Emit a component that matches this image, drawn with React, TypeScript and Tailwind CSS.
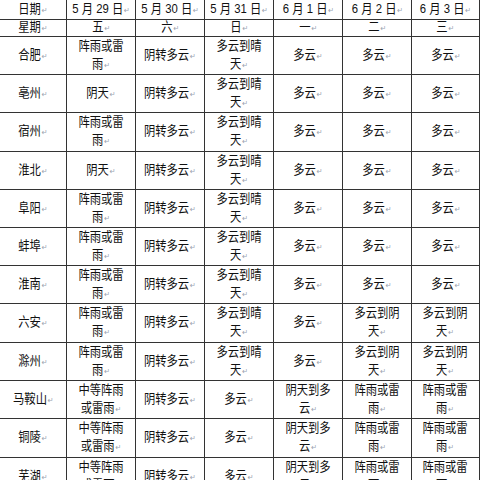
import React from 'react';

const W = {
  a: '阵雨或雷|雨',
  b: '阴天',
  c: '阴转多云',
  d: '多云到晴|天',
  e: '多云',
  f: '多云到阴|天',
  g: '中等阵雨|或雷雨',
  h: '阴天到多|云'
};

const head = ['日期', '5 月 29 日', '5 月 30 日', '5 月 31 日', '6 月 1 日', '6 月 2 日', '6 月 3 日'];
const week = ['星期', '五', '六', '日', '一', '二', '三'];

const rows: string[][] = [
  ['合肥', W.a, W.c, W.d, W.e, W.e, W.e],
  ['亳州', W.b, W.c, W.d, W.e, W.e, W.e],
  ['宿州', W.a, W.c, W.d, W.e, W.e, W.e],
  ['淮北', W.b, W.c, W.d, W.e, W.e, W.e],
  ['阜阳', W.a, W.c, W.d, W.e, W.e, W.e],
  ['蚌埠', W.a, W.c, W.d, W.e, W.e, W.e],
  ['淮南', W.a, W.c, W.d, W.e, W.e, W.e],
  ['六安', W.a, W.c, W.d, W.e, W.f, W.f],
  ['滁州', W.a, W.c, W.d, W.e, W.f, W.f],
  ['马鞍山', W.g, W.c, W.e, W.h, W.a, W.a],
  ['铜陵', W.g, W.c, W.e, W.h, W.a, W.a],
  ['芜湖', W.g, W.c, W.e, W.h, W.a, W.a]
];

function Cell({ text }: { text: string }) {
  const lines = text.split('|');
  return (
    <div className="flex items-center justify-center bg-white overflow-hidden">
      <div className="flex flex-col items-center scale-x-[0.87] leading-[18px]">
        {lines.map((l, i) => (
          <div key={i} className="whitespace-nowrap">
            {l}
            {i === lines.length - 1 && (
              <span className="font-['DejaVu_Sans',sans-serif] text-[8px] text-gray-400 ml-px">↵</span>
            )}
          </div>
        ))}
      </div>
    </div>
  );
}

export default function App() {
  const all = [head, week, ...rows];
  return (
    <div className="w-[480px] h-[480px] overflow-hidden bg-white">
      <div className="grid w-fit -ml-px -mt-px p-px gap-px bg-[#333] grid-cols-[66px_68px_68px_68px_68px_68px_67px] grid-rows-[19px_16px_37px_37px_38px_37px_37px_37px_37px_38px_37px_37px_38px_37px] text-[13px] text-[#111] font-['Liberation_Sans','Noto_Sans_CJK_SC',sans-serif]">
        {all.map((r, ri) => r.map((c, ci) => <Cell key={ri + '-' + ci} text={c} />))}
      </div>
    </div>
  );
}
